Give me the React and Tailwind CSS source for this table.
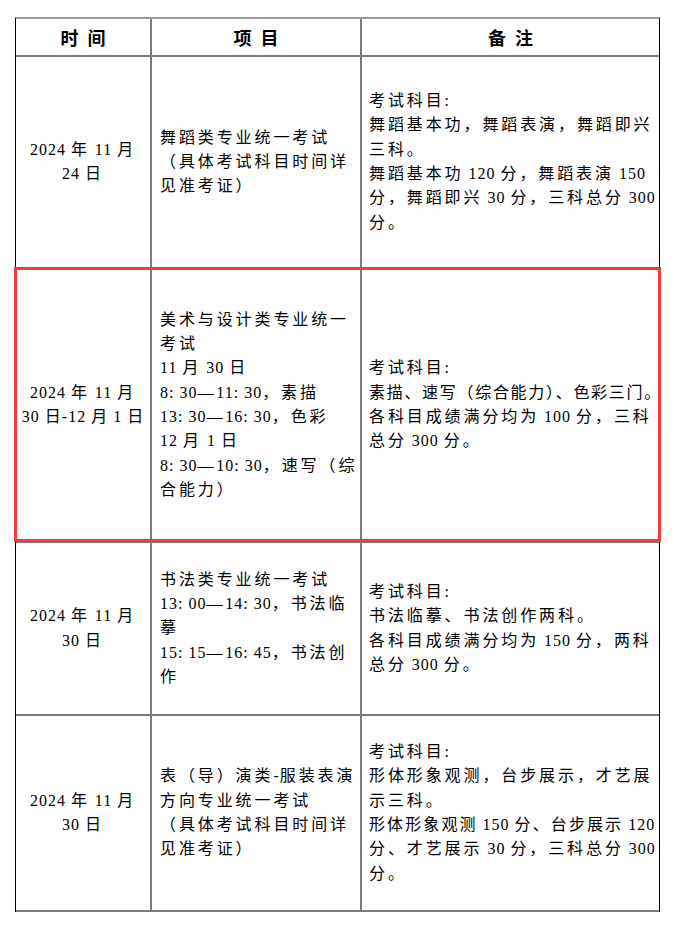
import React from "react";

const rows = [
  {
    h: "h-[212px]",
    date: ["2024 年 11 月", "24 日"],
    item: ["舞蹈类专业统一考试", "（具体考试科目时间详", "见准考证）"],
    note: [
      "考试科目:",
      "舞蹈基本功，舞蹈表演，舞蹈即兴",
      "三科。",
      "舞蹈基本功 120 分，舞蹈表演 150",
      "分，舞蹈即兴 30 分，三科总分 300",
      "分。",
    ],
  },
  {
    h: "h-[274px]",
    red: true,
    date: ["2024 年 11 月", { t: "30 日-12 月 1 日", c: "tracking-[1px]", a: "tracking-[1px]" }],
    item: [
      "美术与设计类专业统一",
      "考试",
      "11 月 30 日",
      "8: 30—11: 30，素描",
      "13: 30—16: 30，色彩",
      "12 月 1 日",
      "8: 30—10: 30，速写（综",
      "合能力）",
    ],
    note: [
      "考试科目:",
      { t: "素描、速写（综合能力）、色彩三门。", c: "tracking-[1.7px]" },
      "各科目成绩满分均为 100 分，三科",
      "总分 300 分。",
    ],
  },
  {
    h: "h-[173px]",
    date: ["2024 年 11 月", "30 日"],
    item: [
      "书法类专业统一考试",
      "13: 00—14: 30，书法临",
      "摹",
      "15: 15—16: 45，书法创",
      "作",
    ],
    note: [
      "考试科目:",
      "书法临摹、书法创作两科。",
      "各科目成绩满分均为 150 分，两科",
      "总分 300 分。",
    ],
  },
  {
    h: "h-[196px]",
    date: ["2024 年 11 月", "30 日"],
    item: [
      "表（导）演类-服装表演",
      "方向专业统一考试",
      "（具体考试科目时间详",
      "见准考证）",
    ],
    note: [
      "考试科目:",
      "形体形象观测，台步展示，才艺展",
      "示三科。",
      { t: "形体形象观测 150 分、台步展示 120", c: "tracking-[2.1px]" },
      "分、才艺展示 30 分，三科总分 300",
      "分。",
    ],
  },
];

function Line({ line }) {
  const t = typeof line === "string" ? line : line.t;
  const c = typeof line === "string" ? "tracking-[2.9px]" : line.c;
  const a = typeof line === "string" || !line.a ? "tracking-[1px]" : line.a;
  const parts = t.split(/([0-9: \-]+)/).filter((p) => p.length);
  return (
    <div className="whitespace-pre">
      {parts.map((p, i) =>
        /^[0-9: \-]+$/.test(p) ? (
          <span key={i} className={a}>
            {p}
          </span>
        ) : (
          <span key={i} className={c}>
            {p}
          </span>
        )
      )}
    </div>
  );
}

function Lines({ lines, className = "" }) {
  return (
    <div className={className}>
      {lines.map((l, i) => (
        <Line key={i} line={l} />
      ))}
    </div>
  );
}

export default function App() {
  return (
    <div className="w-[674px] h-[926px] bg-white text-black pt-[17px] pl-[15px] font-['Liberation_Serif','Noto_Sans_CJK_SC',serif]">
      <div className="w-[645px] border-x border-black border-t-2 border-t-[#9c9c9c] flex flex-col">
        <div className="grid grid-cols-[136px_210px_1fr] h-[38px] border-b-2 border-[#7a7a7a] font-['Noto_Sans_CJK_SC',sans-serif] font-bold text-[18px]">
          <div className="border-r-2 border-[#7a7a7a] flex items-center justify-center gap-[9px]">
            <span>时</span>
            <span>间</span>
          </div>
          <div className="border-r-2 border-[#7a7a7a] flex items-center justify-center gap-[9px]">
            <span>项</span>
            <span>目</span>
          </div>
          <div className="flex items-center justify-center gap-[9px]">
            <span>备</span>
            <span>注</span>
          </div>
        </div>
        {rows.map((r, i) => (
          <div
            key={i}
            className={`relative grid grid-cols-[136px_210px_1fr] ${r.h} border-b-2 border-[#7a7a7a] text-[16px] leading-[24.3px]`}
          >
            <div className="border-r-2 border-[#7a7a7a] flex items-center justify-center">
              <Lines lines={r.date} className="text-center" />
            </div>
            <div className="border-r-2 border-[#7a7a7a] flex items-center pl-[8px]">
              <Lines lines={r.item} />
            </div>
            <div className="flex items-center pl-[7px]">
              <Lines lines={r.note} />
            </div>
            {r.red && (
              <div className="absolute -left-[2px] -top-[2px] -right-[2px] -bottom-[1px] border-[3px] border-[#f23b3b] pointer-events-none" />
            )}
          </div>
        ))}
      </div>
    </div>
  );
}
